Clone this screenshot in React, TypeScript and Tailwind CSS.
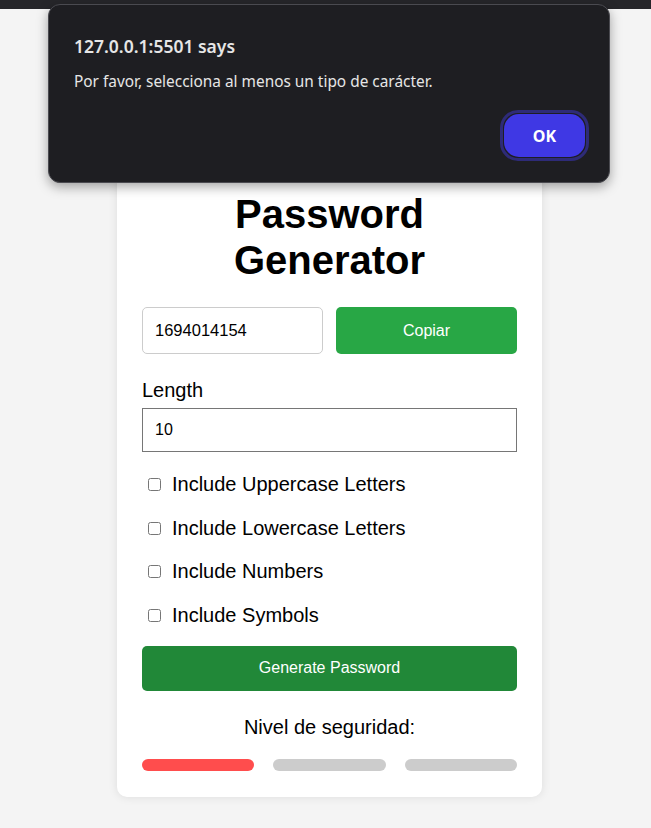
import React from "react";

export default function App() {
  const arial = { fontFamily: '"Liberation Sans", Arial, sans-serif' };
  const rows = [
    "Include Uppercase Letters",
    "Include Lowercase Letters",
    "Include Numbers",
    "Include Symbols",
  ];
  return (
    <div className="relative min-h-[828px] bg-[#f4f4f4] text-black" style={arial}>
      <div className="h-[9px] bg-[#26262a]" />
      <div className="flex justify-center pl-[8px] pt-[141px] pb-[31px]">
        <div className="w-[425px] rounded-[10px] bg-white px-[25px] pt-[41px] pb-[26px] shadow-[0_0_10px_rgba(0,0,0,0.1)]">
          <h1 className="text-center text-[40px] font-bold leading-[46px]">Password Generator</h1>
          <div className="mt-[24px] flex gap-[13px]">
            <input
              readOnly
              value="1694014154"
              className="h-[47px] w-[181px] rounded-[5px] border border-[#ccc] px-[12px] text-[16.5px] outline-none"
              style={arial}
            />
            <button className="h-[47px] flex-1 rounded-[5px] bg-[#28a745] text-[16px] text-white" style={arial}>
              Copiar
            </button>
          </div>
          <div className="mt-[25px] text-[20px] leading-[23px]">Length</div>
          <input
            readOnly
            value="10"
            className="mt-[6px] block h-[44px] w-full border border-[#767676] px-[12px] text-[16px] outline-none"
            style={arial}
          />
          <div className="mt-[21px] flex flex-col gap-[20.6px]">
            {rows.map((r) => (
              <label key={r} className="flex h-[23px] items-center text-[20px] leading-[23px]">
                <input type="checkbox" className="m-0 ml-[6px] h-[13px] w-[13px]" />
                <span className="ml-[11px]">{r}</span>
              </label>
            ))}
          </div>
          <button className="mt-[19px] block h-[45px] w-full rounded-[5px] bg-[#218838] text-[16px] text-white" style={arial}>
            Generate Password
          </button>
          <div className="mt-[25px] text-center text-[20px] leading-[23px]">Nivel de seguridad:</div>
          <div className="mt-[20px] flex gap-[19px]">
            <div className="h-[12px] flex-1 rounded-full bg-[#ff4d4d]" />
            <div className="h-[12px] flex-1 rounded-full bg-[#cccccc]" />
            <div className="h-[12px] flex-1 rounded-full bg-[#cccccc]" />
          </div>
        </div>
      </div>

      <div
        className="absolute left-[48px] top-[4px] h-[179px] w-[562px] rounded-[12px] border border-[#4a4a50] bg-[#1e1e22] shadow-[0_4px_12px_rgba(0,0,0,0.35)]"
        style={{ fontFamily: '"Noto Sans", "Open Sans", sans-serif' }}
      >
        <div className="pl-[25px] pt-[29px] text-[17.5px] font-semibold leading-[24px] text-[#e6e6e6]">127.0.0.1:5501 says</div>
        <div className="pl-[25px] pt-[14px] text-[15.4px] leading-[20px] text-[#e6e6e6]">
          Por favor, selecciona al menos un tipo de carácter.
        </div>
        <div className="absolute left-[451px] top-[105px] rounded-[18px] border-[3px] border-[#2e2b78] p-[1px]">
          <button className="flex h-[43px] w-[81px] items-center justify-center rounded-[15px] bg-[#3f38e4] text-[16px] font-bold text-white">
            OK
          </button>
        </div>
      </div>
    </div>
  );
}
